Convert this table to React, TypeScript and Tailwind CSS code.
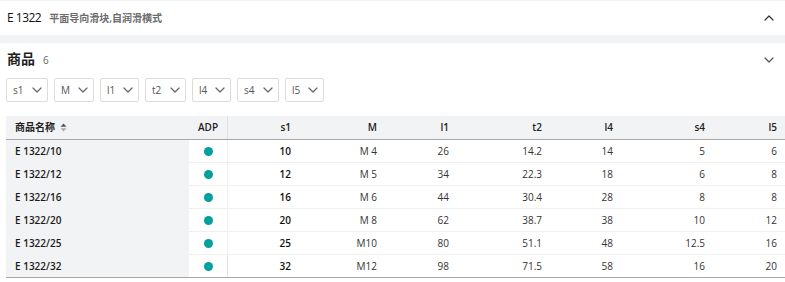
import React from "react";

const rows = [
  ["E 1322/10", "10", "M 4", "26", "14.2", "14", "5", "6"],
  ["E 1322/12", "12", "M 5", "34", "22.3", "18", "6", "8"],
  ["E 1322/16", "16", "M 6", "44", "30.4", "28", "8", "8"],
  ["E 1322/20", "20", "M 8", "62", "38.7", "38", "10", "12"],
  ["E 1322/25", "25", "M10", "80", "51.1", "48", "12.5", "16"],
  ["E 1322/32", "32", "M12", "98", "71.5", "58", "16", "20"],
];

const filters: [string, string][] = [
  ["s1", "w-[42px]"],
  ["M", "w-[40px]"],
  ["l1", "w-[39px]"],
  ["t2", "w-[41px]"],
  ["l4", "w-[39px]"],
  ["s4", "w-[42px]"],
  ["l5", "w-[39px]"],
];

const Chevron = ({ up, className }: { up?: boolean; className?: string }) => (
  <svg width="10" height="6" viewBox="0 0 10 6" className={className} fill="none">
    <path
      d={up ? "M1 5 L5 1 L9 5" : "M1 1 L5 5 L9 1"}
      stroke="currentColor"
      strokeWidth="1.2"
      strokeLinecap="round"
      strokeLinejoin="round"
    />
  </svg>
);

const SortIcon = () => (
  <svg width="7" height="9" viewBox="0 0 7 9" className="ml-[5px]">
    <path d="M3.5 0.5 L6.5 3.8 L0.5 3.8 Z" fill="#555" />
    <path d="M3.5 8.5 L6.5 5.2 L0.5 5.2 Z" fill="#aaa" />
  </svg>
);

const grid =
  "grid grid-cols-[183px_39px_72px_86px_72px_93px_71px_92px_72px]";

export default function App() {
  return (
    <div
      className="w-[785px] h-[282px] bg-white overflow-hidden text-[#1f1f1f]"
      style={{ fontFamily: "'Open Sans', 'Noto Sans CJK SC', sans-serif" }}
    >
      <div className="h-px bg-[#f2f3f5]" />
      <div className="h-[34px] flex items-center justify-between pl-[7px] pr-[11px]">
        <div className="flex items-baseline gap-[8px]">
          <span className="text-[12px] tracking-[-0.5px] text-[#111]">E 1322</span>
          <span className="text-[10px] font-semibold text-[#6b6b6b]">平面导向滑块,自润滑横式</span>
        </div>
        <Chevron up className="text-[#333]" />
      </div>
      <div className="h-[8px] bg-[#f2f3f5]" />
      <div className="pt-[9px]">
        <div className="h-[16px] flex items-center justify-between pl-[7px] pr-[11px]">
          <div className="flex items-baseline gap-[8px]">
            <span className="text-[14px] font-bold leading-none">商品</span>
            <span className="text-[10px] text-[#666]">6</span>
          </div>
          <Chevron className="text-[#555]" />
        </div>
        <div className="flex gap-[6px] pl-[6px] mt-[10px]">
          {filters.map(([label, w]) => (
            <div
              key={label}
              className={`${w} h-[24px] border border-[#dcdcdc] rounded-[2px] flex items-center justify-between pl-[6px] pr-[5px] text-[10px] text-[#555]`}
            >
              <span>{label}</span>
              <Chevron className="text-[#666]" />
            </div>
          ))}
        </div>
        <div className="ml-[6px] mt-[14px] text-[10px]">
          <div className={`${grid} h-[24px] border-b border-[#a8a8a8] bg-[#f2f3f5] font-semibold text-[#222]`}>
            <div className="flex items-center pl-[9px]">
              <span>商品名称</span>
              <SortIcon />
            </div>
            <div className="flex items-center justify-center border-r border-[#e0e0e0]">ADP</div>
            {["s1", "M", "l1", "t2", "l4", "s4", "l5"].map((h) => (
              <div key={h} className="flex items-center justify-end pr-[9px]">
                {h}
              </div>
            ))}
          </div>
          {rows.map((r, i) => (
            <div
              key={r[0]}
              className={`${grid} h-[23px] ${i === rows.length - 1 ? "border-b border-[#a8a8a8]" : ""}`}
            >
              <div className={`flex items-center pl-[9px] bg-[#f2f3f5] font-semibold text-[#1a1a1a] ${i === rows.length - 1 ? "" : "border-b border-[#f2f3f5]"}`}>
                {r[0]}
              </div>
              <div className={`flex items-center justify-center border-r border-[#e0e0e0] ${i === rows.length - 1 ? "" : "border-b border-[#efefef]"}`}>
                <span className="w-[9px] h-[9px] rounded-full bg-[#00a19c]" />
              </div>
              {r.slice(1).map((v, j) => (
                <div
                  key={j}
                  className={`flex items-center justify-end pr-[9px] ${j === 0 ? "font-semibold text-[#111]" : "text-[#333]"} ${i === rows.length - 1 ? "" : "border-b border-[#efefef]"}`}
                >
                  {v}
                </div>
              ))}
            </div>
          ))}
        </div>
      </div>
    </div>
  );
}
